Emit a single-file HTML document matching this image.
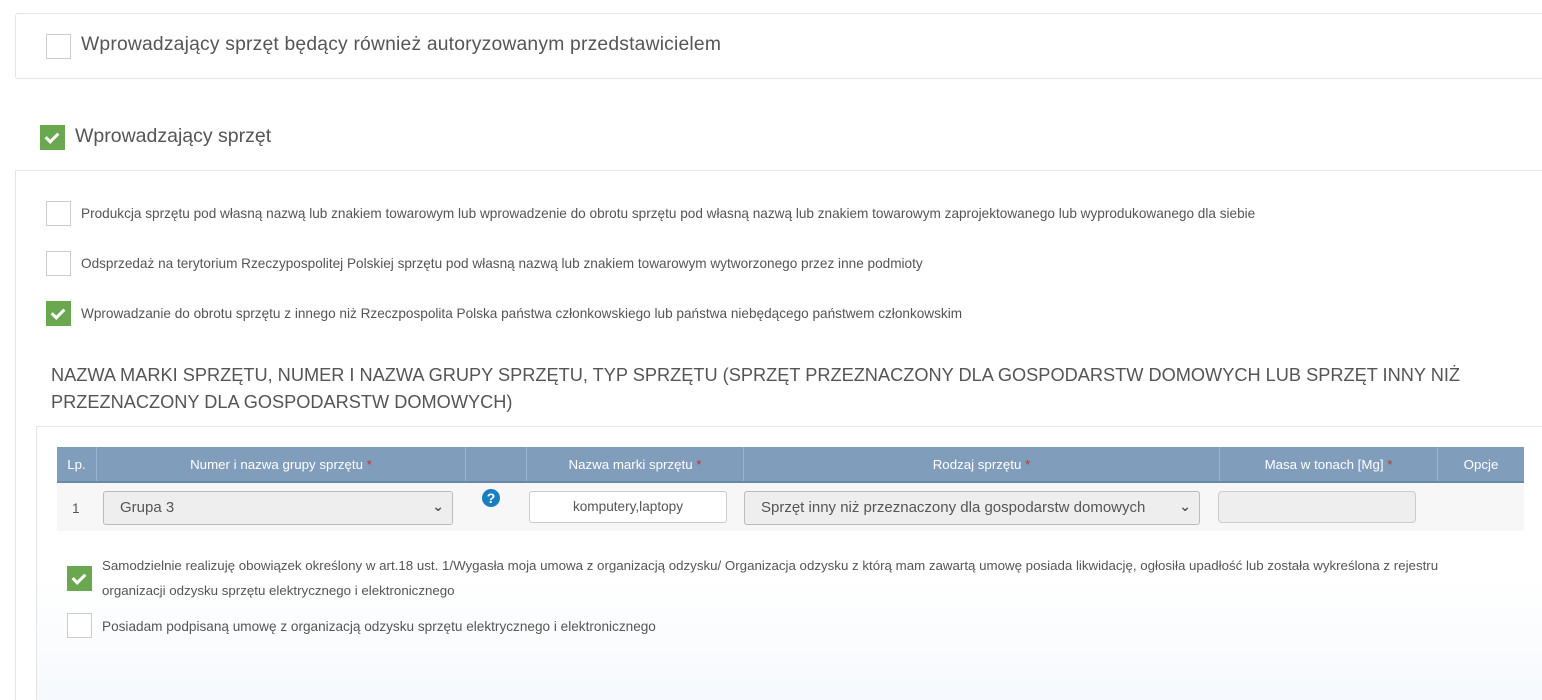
<!DOCTYPE html>
<html><head><meta charset="utf-8"><style>
html,body{margin:0;width:1542px;height:700px;overflow:hidden}
body{background:#fff;font-family:"Liberation Sans","DejaVu Sans",sans-serif;color:#555;position:relative}
.a{position:absolute}
.cb{position:absolute;width:23px;height:23px;border:1px solid #ccc;background:#fff}
.cb.on{background:#6aa84f;border-color:#6aa84f}
.cb.on::after{content:"";position:absolute;left:7px;top:4px;width:5px;height:10px;border:solid #fff;border-width:0 3px 3px 0;transform:rotate(45deg)}
.t13{font-size:13.6px;white-space:nowrap}
th{font-weight:normal}
.st{color:#c0392b}
</style></head><body>
<div class="a" style="left:15px;top:13px;width:1527px;height:64px;border:1px solid #e5e5e5;border-right:none;border-radius:3px 0 0 3px"></div>
<div class="cb" style="left:46px;top:34px"></div>
<div class="a" style="left:81px;top:34px;font-size:19.3px;white-space:nowrap;letter-spacing:0.2px">Wprowadzający sprzęt będący również autoryzowanym przedstawicielem</div>

<div class="cb on" style="left:40px;top:125px"></div>
<div class="a" style="left:75px;top:125px;font-size:19.5px;white-space:nowrap">Wprowadzający sprzęt</div>

<div class="a" style="left:15px;top:170px;width:1527px;height:530px;border-left:1px solid #e5e5e5;border-top:1px solid #e5e5e5"></div>
<div class="cb" style="left:46px;top:201px"></div>
<div class="a t13" style="left:81px;top:206px">Produkcja sprzętu pod własną nazwą lub znakiem towarowym lub wprowadzenie do obrotu sprzętu pod własną nazwą lub znakiem towarowym zaprojektowanego lub wyprodukowanego dla siebie</div>
<div class="cb" style="left:46px;top:251px"></div>
<div class="a t13" style="left:81px;top:256px">Odsprzedaż na terytorium Rzeczypospolitej Polskiej sprzętu pod własną nazwą lub znakiem towarowym wytworzonego przez inne podmioty</div>
<div class="cb on" style="left:46px;top:301px"></div>
<div class="a t13" style="left:81px;top:306px">Wprowadzanie do obrotu sprzętu z innego niż Rzeczpospolita Polska państwa członkowskiego lub państwa niebędącego państwem członkowskim</div>

<div class="a" style="left:51px;top:362px;font-size:18.2px;line-height:27px;white-space:nowrap">NAZWA MARKI SPRZĘTU, NUMER I NAZWA GRUPY SPRZĘTU, TYP SPRZĘTU (SPRZĘT PRZEZNACZONY DLA GOSPODARSTW DOMOWYCH LUB SPRZĘT INNY NIŻ<br>PRZEZNACZONY DLA GOSPODARSTW DOMOWYCH)</div>

<div class="a" style="left:36px;top:426px;width:1506px;height:274px;border-left:1px solid #e5e5e5;border-top:1px solid #e5e5e5;background:linear-gradient(#fff 55%,#f6f9fd)"></div>
<table class="a" style="left:57px;top:447px;width:1467px;border-collapse:collapse;font-size:13.3px;table-layout:fixed">
<tr style="background:#809dbb;color:#fff;height:35px;border-bottom:2px solid #6a88a8">
<th style="width:37px;border-right:1px solid #9cb3cb">Lp.</th>
<th style="width:366px;border-right:1px solid #9cb3cb">Numer i nazwa grupy sprzętu <span class="st">*</span></th>
<th style="width:58px;border-right:1px solid #9cb3cb"></th>
<th style="width:214px;border-right:1px solid #9cb3cb">Nazwa marki sprzętu <span class="st">*</span></th>
<th style="width:473px;border-right:1px solid #9cb3cb">Rodzaj sprzętu <span class="st">*</span></th>
<th style="width:215px;border-right:1px solid #9cb3cb">Masa w tonach [Mg] <span class="st">*</span></th>
<th>Opcje</th></tr>
<tr style="background:#f7f7f7;height:49px"><td colspan="7"></td></tr>
</table>
<div class="a t13" style="left:72px;top:501px">1</div>
<div class="a" style="left:103px;top:491px;border:1px solid #bbb;border-radius:3px;background:#eee;font-size:15px;line-height:32px;box-sizing:border-box;padding-left:16px;width:350px;height:34px">Grupa 3<span style="position:absolute;right:8px;top:-2px;font-size:14px;font-weight:bold">&#8964;</span></div>
<div class="a" style="left:482px;top:489px;width:18px;height:18px;border-radius:50%;background:#1a7fc1;color:#fff;font-weight:bold;font-size:14px;text-align:center;line-height:18px">?</div>
<div class="a" style="left:529px;top:491px;width:198px;height:32px;border:1px solid #ccc;border-radius:3px;background:#fff;box-sizing:border-box;font-size:13.6px;text-align:center;line-height:30px">komputery,laptopy</div>
<div class="a" style="left:744px;top:491px;width:456px;height:34px;border:1px solid #bbb;border-radius:3px;background:#eee;box-sizing:border-box;font-size:15px;line-height:32px;padding-left:16px;white-space:nowrap">Sprzęt inny niż przeznaczony dla gospodarstw domowych<span style="position:absolute;right:8px;top:-2px;font-size:14px;font-weight:bold">&#8964;</span></div>
<div class="a" style="left:1218px;top:491px;width:198px;height:32px;border:1px solid #ccc;border-radius:4px;background:#eee;box-sizing:border-box"></div>

<div class="cb on" style="left:67px;top:566px"></div>
<div class="a t13" style="left:102px;top:553px;line-height:25px;font-size:13.3px">Samodzielnie realizuję obowiązek określony w art.18 ust. 1/Wygasła moja umowa z organizacją odzysku/ Organizacja odzysku z którą mam zawartą umowę posiada likwidację, ogłosiła upadłość lub została wykreślona z rejestru<br>organizacji odzysku sprzętu elektrycznego i elektronicznego</div>
<div class="cb" style="left:67px;top:613px"></div>
<div class="a t13" style="left:102px;top:619px">Posiadam podpisaną umowę z organizacją odzysku sprzętu elektrycznego i elektronicznego</div>
</body></html>
